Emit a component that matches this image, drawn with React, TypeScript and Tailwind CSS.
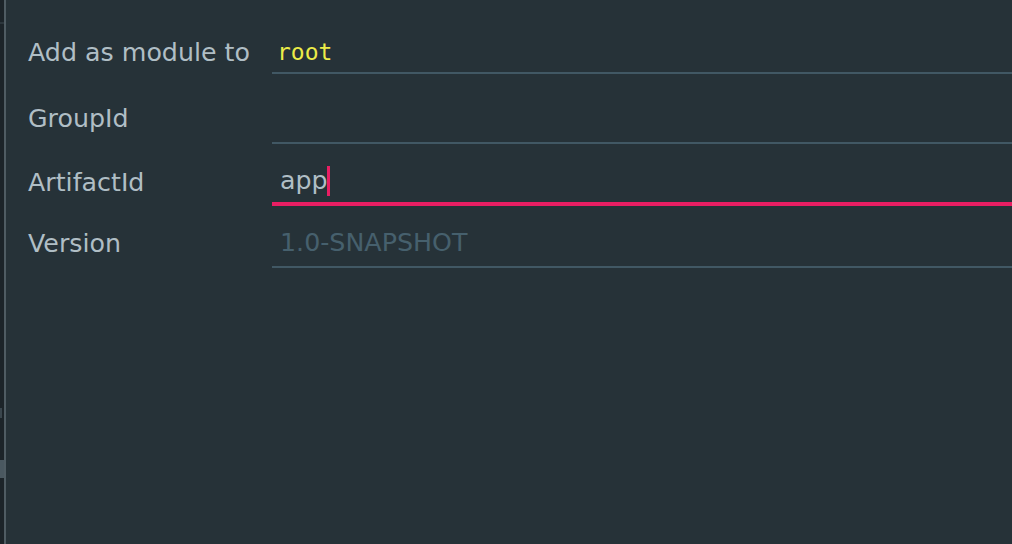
import React from "react";

const sans = { fontFamily: '"DejaVu Sans", "Liberation Sans", sans-serif' };
const mono = { fontFamily: '"DejaVu Sans Mono", "Liberation Mono", monospace' };

function Row({
  label,
  children,
  className,
  border,
}: {
  label: string;
  children?: React.ReactNode;
  className: string;
  border: string;
}) {
  return (
    <div className={`flex ${className}`}>
      <div className="w-[244px] flex items-center text-[25.3px] leading-none text-[#b0bec5]" style={sans}>
        {label}
      </div>
      <div className={`flex-1 flex items-center pl-[8px] ${border}`}>{children}</div>
    </div>
  );
}

export default function App() {
  return (
    <div className="w-[1012px] h-[544px] flex bg-[#263238] overflow-hidden">
      <div className="w-[4px] h-full bg-[#1c2429] flex flex-col">
        <div className="h-[22px]" />
        <div className="h-[2px] bg-[#2c363c]" />
        <div className="h-[384px]" />
        <div className="h-[10px] w-[2px] bg-[#3a464d]" />
        <div className="h-[42px]" />
        <div className="h-[18px] bg-[#4a5860]" />
      </div>
      <div className="w-[2px] h-full bg-[#4f5c63]" />
      <div className="flex-1 flex flex-col pl-[22px]">
        <Row label="Add as module to" className="mt-[32px] h-[42px]" border="border-b-2 border-[#415864]">
          <span className="text-[23px] leading-none text-[#ecec48] -ml-[3px]" style={mono}>
            root
          </span>
        </Row>
        <Row label="GroupId" className="mt-[20px] h-[50px]" border="border-b-2 border-[#415864]" />
        <Row label="ArtifactId" className="mt-[16px] h-[46px]" border="border-b-4 border-[#e91e63]">
          <span className="text-[25.3px] leading-none text-[#b0bec5] flex items-center" style={sans}>
            app
            <span className="inline-block w-[3px] h-[30px] bg-[#e91e63] -ml-[1px]" />
          </span>
        </Row>
        <Row label="Version" className="mt-[13px] h-[49px]" border="border-b-2 border-[#415864]">
          <span className="text-[25.3px] leading-none text-[#46606d]" style={sans}>
            1.0-SNAPSHOT
          </span>
        </Row>
      </div>
    </div>
  );
}
